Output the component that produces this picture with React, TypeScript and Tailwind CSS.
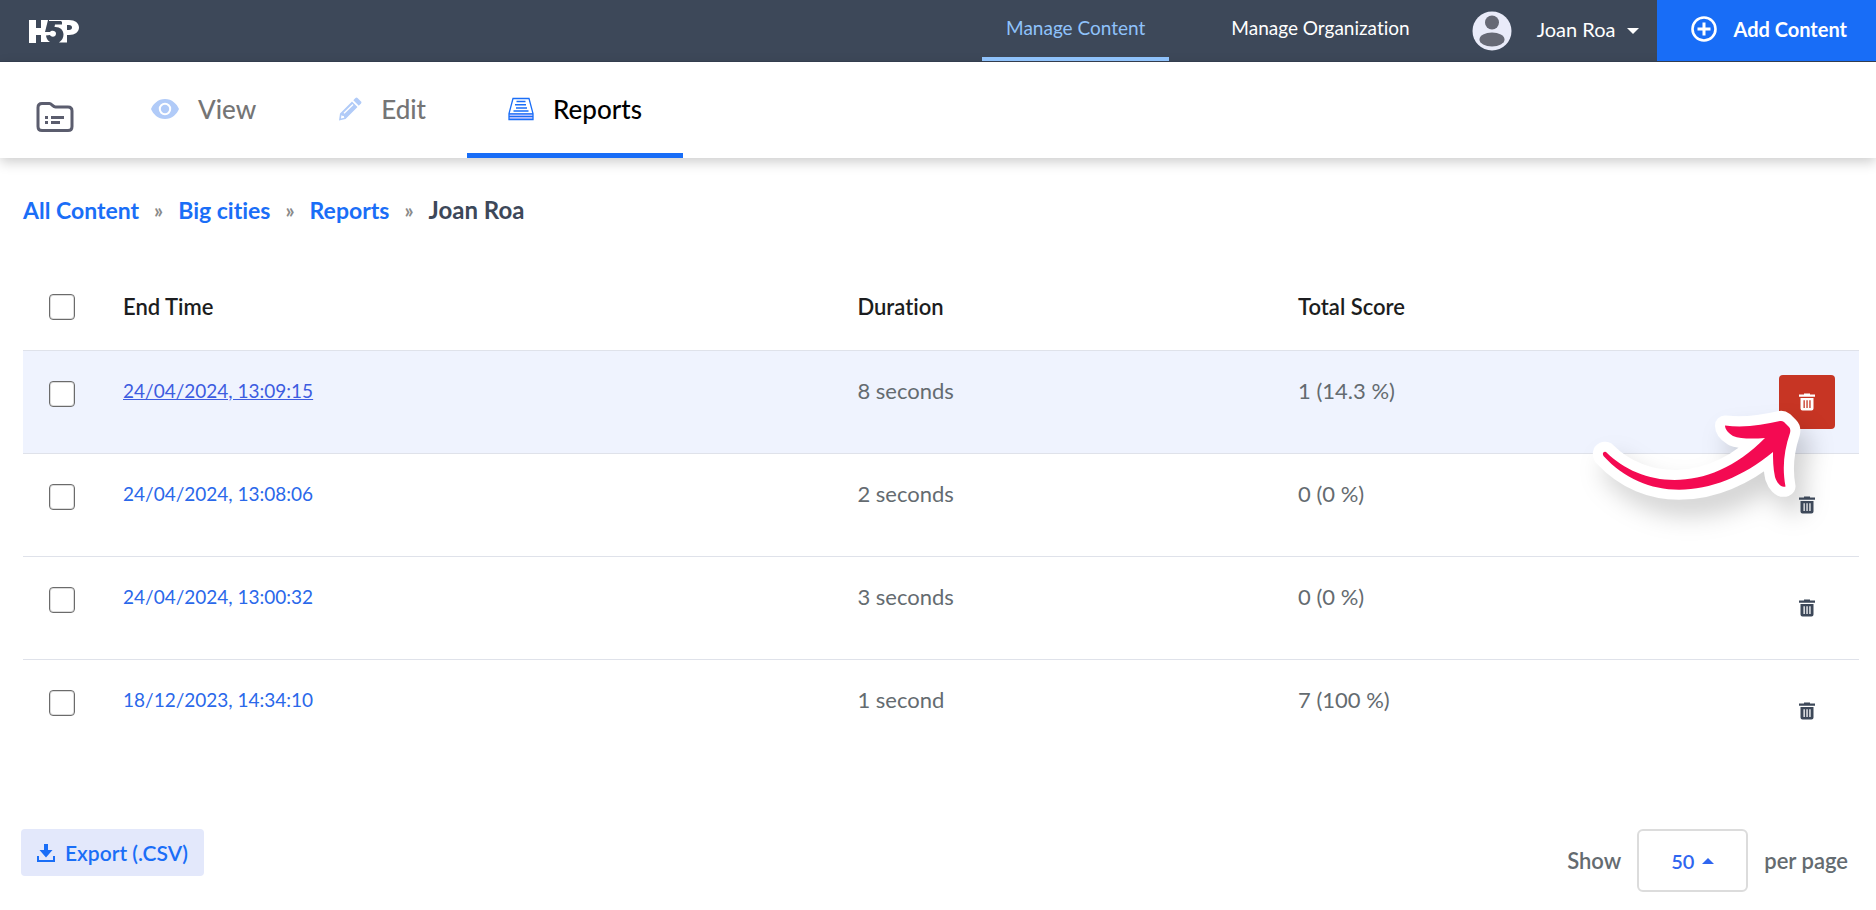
import React from "react";

const rows = [
  { time: "24/04/2024, 13:09:15", duration: "8 seconds", score: "1 (14.3 %)", active: true },
  { time: "24/04/2024, 13:08:06", duration: "2 seconds", score: "0 (0 %)", active: false },
  { time: "24/04/2024, 13:00:32", duration: "3 seconds", score: "0 (0 %)", active: false },
  { time: "18/12/2023, 14:34:10", duration: "1 second", score: "7 (100 %)", active: false },
];

function Logo() {
  return (
    <svg viewBox="0 0 51 24" className="h-6 w-[51px]" aria-label="H5P" role="img">
      <path
        fill="#fff"
        d="M1 1h7v8h5V1h7l-3 12h5c1-2 6-2 6 1.500 0 4-5 4-6 1.500l-4 .6c.4 3 1.500 5 4 6.400H13v-7H8v8H1z"
      />
      <path fill="#fff" d="M21 1h20c6 0 10 3 10 7.500S47 16 41 16h-2v7.500h-8c3-2 4.500-5 4.500-8 0-5-4-8-9-7.500l.5-2.500H34V3l-1-1H21zM39 6v5h2c2 0 3-1 3-2.500S43 6 41 6z" fillRule="evenodd" />
    </svg>
  );
}

function FolderIcon() {
  return (
    <svg viewBox="0 0 38 32" className="h-8 w-[38px]" fill="none" stroke="#5b5d6e" strokeWidth="3">
      <path d="M6 2.500h7.500c2 0 3.500 3.500 6 3.500H32q4 0 4 4v15.500q0 4-4 4H6q-4 0-4-4v-19q0-4 4-4z" />
      <path d="M9 16.500h3M15 16.500h13M9 21.500h3M15 21.500h9" />
    </svg>
  );
}

function EyeIcon() {
  return (
    <svg viewBox="0 0 28 20" className="h-5 w-7">
      <path fill="#b1cbf8" fillRule="evenodd" d="M14 0c7 0 12 5 14 10-2 5-7 10-14 10S2 15 0 10C2 5 7 0 14 0zm0 3.800a6.200 6.200 0 100 12.400 6.200 6.200 0 000-12.400z" />
      <circle cx="14" cy="10" r="4.200" fill="#b1cbf8" />
    </svg>
  );
}

function PencilIcon() {
  return (
    <svg viewBox="0 0 24 24" className="size-6">
      <path fill="#b1cbf8" fillRule="evenodd" d="M2 16.500L14 4.500l5.500 5.500L7.500 22 1 23.500zM3.500 18l-.6 3.400 3.400-.7-.5-1.700-1.800-.2zM5.500 15.800l1 1L15.500 8l-1-1z" />
      <path fill="#b1cbf8" d="M15.300 3.200L17.500 1q1-1 2 0L23 4.500q1 1 0 2L20.800 8.700z" />
    </svg>
  );
}

function ReportsIcon() {
  return (
    <svg viewBox="0 0 26 24" className="h-6 w-[26px]" fill="none" stroke="#1a6ef7">
      <path fill="#b3bdfb" stroke="none" d="M1 16h24v6H1z" />
      <path strokeWidth="1.300" d="M1 22.500V16.500L5 1.500h16L25 16.500v6zM1 16.800h24" />
      <path strokeWidth="1" d="M1 19.500h24" />
      <path strokeWidth="1.500" d="M8.500 4.500h9M7 7.800h11M8 11h11M5.500 14h15" />
    </svg>
  );
}

function TrashIcon() {
  return (
    <svg viewBox="0 0 16 18" className="h-[18px] w-4" fill="currentColor">
      <path fillRule="evenodd" d="M5 .5h6V1.500h5v2.200H0V1.500h5zM1.500 5h13v10.500q0 2-2 2h-9q-2 0-2-2zm3 2.200V15h1.300V7.200zm2.900 0V15h1.300V7.200zm2.900 0V15h1.300V7.200z" />
    </svg>
  );
}

function PointerArrow() {
  const shape =
    "M46 101C83 138 150 143 205 87C193 88 180 88 173 85C168 82 165 78 165 74.500C184 77 203 74 220 70Q222 69.500 224 71L229 76Q231 78 230 82C224 100 222 116 225.500 135.500C221 137 217 132 215 126C213 117 213 108 213 101C155 149 86 152 43.500 105Q42 102 44 101Q45 100.500 46 101Z";
  return (
    <svg viewBox="0 0 316 180" className="pointer-events-none absolute top-full right-[-41px] -mt-[78px] h-[180px] w-[316px] overflow-visible drop-shadow-[10px_16px_12px_rgba(0,0,0,0.18)]" aria-hidden="true">
      <path d={shape} fill="#fff" stroke="#fff" strokeWidth="20" strokeLinejoin="round" />
      <path d={shape} fill="#f40a52" />
    </svg>
  );
}

function Tick({ label }: { label: string }) {
  return (
    <input
      type="checkbox"
      aria-label={label}
      className="block size-[26px] appearance-none rounded-[4px] border border-[#6b6b6b] bg-white shadow-[inset_0_0_0_1px_#dcdcdc] checked:bg-[#1a6ef7]"
    />
  );
}

export default function App() {
  return (
    <div className="min-h-screen bg-white font-['Lato','Noto_Sans',sans-serif] text-[20px] leading-6 text-[#646b70] [font-variant-ligatures:none]">
      <header className="flex h-[62px] items-stretch border-b border-[#364052] bg-[#3d4859] text-white">
        <a href="#home" className="flex items-center pl-7"><Logo /></a>
        <nav className="ml-auto flex text-[19px]">
          <a href="#content" className="border-b-4 border-[#8fc2fb] px-6 pt-4 text-[#8fc2fb]">Manage Content</a>
          <a href="#organization" className="px-[62px] pt-4">Manage Organization</a>
        </nav>
        <button type="button" className="flex items-center pr-[18px]">
          <svg viewBox="0 0 40 40" className="mr-[25px] size-10">
            <circle cx="20" cy="20" r="19.500" fill="#e9ebf9" />
            <circle cx="20" cy="11.500" r="7" fill="#666975" />
            <ellipse cx="20" cy="28.500" rx="12.500" ry="7" fill="#666975" />
          </svg>
          <span className="pb-1">Joan Roa</span>
          <svg viewBox="0 0 12 6" className="ml-3 h-1.5 w-3"><path d="M0 0h12L6 6z" fill="#fff" /></svg>
        </button>
        <button type="button" className="flex items-center gap-4 bg-[#186df7] pr-[29px] pb-1 pl-[34px] font-bold">
          <svg viewBox="0 0 26 26" className="size-[26px]" fill="none" stroke="#fff" strokeWidth="2.600">
            <circle cx="13" cy="13" r="11.500" />
            <path d="M13 6.500v13M6.500 13h13" strokeWidth="3" />
          </svg>
          Add Content
        </button>
      </header>

      <nav className="flex h-24 items-stretch text-[26px] font-medium text-[#757575] shadow-[0_4px_12px_rgba(0,0,0,0.2)]">
        <a href="#folder" aria-label="Folder" className="flex items-center px-9 pt-3.5"><FolderIcon /></a>
        <a href="#view" className="flex items-center gap-[19px] border-b-[5px] border-transparent px-[41px] pt-0.5"><EyeIcon />View</a>
        <a href="#edit" className="flex items-center gap-[19px] border-b-[5px] border-transparent px-[41px] pt-0.5"><PencilIcon />Edit</a>
        <a href="#reports" className="flex items-center gap-[19px] border-b-[5px] border-[#186df7] px-[41px] pt-0.5 text-black"><ReportsIcon />Reports</a>
      </nav>

      <main className="pt-10 pr-[17px] pl-[23px]">
        <nav aria-label="Breadcrumb" className="flex items-center gap-[15px] text-[23px] font-bold text-[#1a6ef7]">
          <a href="#all">All Content</a>
          <span className="text-[20px] text-[#8a8a8a]">»</span>
          <a href="#cities">Big cities</a>
          <span className="text-[20px] text-[#8a8a8a]">»</span>
          <a href="#reports">Reports</a>
          <span className="text-[20px] text-[#8a8a8a]">»</span>
          <span className="text-[24px] text-[#3d4859]">Joan Roa</span>
        </nav>

        <table className="mt-[43px] w-full table-fixed border-collapse text-left text-[22px]">
          <thead>
            <tr className="h-[85px] text-[#1c1d20]">
              <th className="w-[100px] pl-[26px]"><Tick label="Select all" /></th>
              <th className="w-[40%] font-semibold">End Time</th>
              <th className="w-[24%] font-semibold">Duration</th>
              <th className="font-semibold">Total Score</th>
              <th className="w-20" aria-label="Actions"></th>
            </tr>
          </thead>
          <tbody>
            {rows.map((row) => (
              <tr key={row.time} className={row.active ? "h-[103px] border-y border-[#dfe2ea] bg-[#eff3fe] align-top" : "h-[103px] border-t border-[#dfe2ea] align-top"}>
                <td className="pt-[30px] pl-[26px]"><Tick label={"Select " + row.time} /></td>
                <td className="pt-7 text-[19px]"><a href="#attempt" className={row.active ? "text-[#3d5ce0] underline" : "text-[#2a68ea]"}>{row.time}</a></td>
                <td className="pt-7">{row.duration}</td>
                <td className="pt-7">{row.score}</td>
                <td className="pt-6">
                  <div className="relative w-14">
                    <button
                      type="button"
                      aria-label={"Delete " + row.time}
                      className={row.active ? "flex h-[54px] w-14 items-center justify-center rounded-[4px] bg-[#c73524] text-white" : "flex h-[54px] w-14 items-center justify-center rounded-[4px] text-[#3d4859]"}
                    >
                      <TrashIcon />
                    </button>
                    {row.active && <PointerArrow />}
                  </div>
                </td>
              </tr>
            ))}
          </tbody>
        </table>

        <footer className="-ml-0.5 flex items-start justify-between pt-[67px] pr-[11px] text-[22px] font-semibold">
          <button type="button" className="flex h-[47px] items-center gap-2.5 rounded-[4px] bg-[#e3e8fb] px-4 text-[21px] text-[#1a6ef7]">
            <svg viewBox="0 0 18 18" className="size-[18px]" fill="#1a6ef7">
              <path d="M7 0h4v6h4.500L9 13.500 2.500 6H7zM0 12h2v4h14v-4h2v6H0z" />
            </svg>
            Export (.CSV)
          </button>
          <div className="flex items-center gap-4">
            <label htmlFor="page-size">Show</label>
            <div className="relative">
              <select id="page-size" defaultValue="50" className="h-[63px] w-[111px] appearance-none rounded-md border-2 border-[#dcdcdc] bg-white pl-8 text-[20px] text-[#2f66f0]">
                <option>50</option>
                <option>100</option>
              </select>
              <svg viewBox="0 0 12 6" className="pointer-events-none absolute top-[29px] right-[34px] h-1.5 w-3"><path d="M0 6h12L6 0z" fill="#2f66f0" /></svg>
            </div>
            <span>per page</span>
          </div>
        </footer>
      </main>
    </div>
  );
}
